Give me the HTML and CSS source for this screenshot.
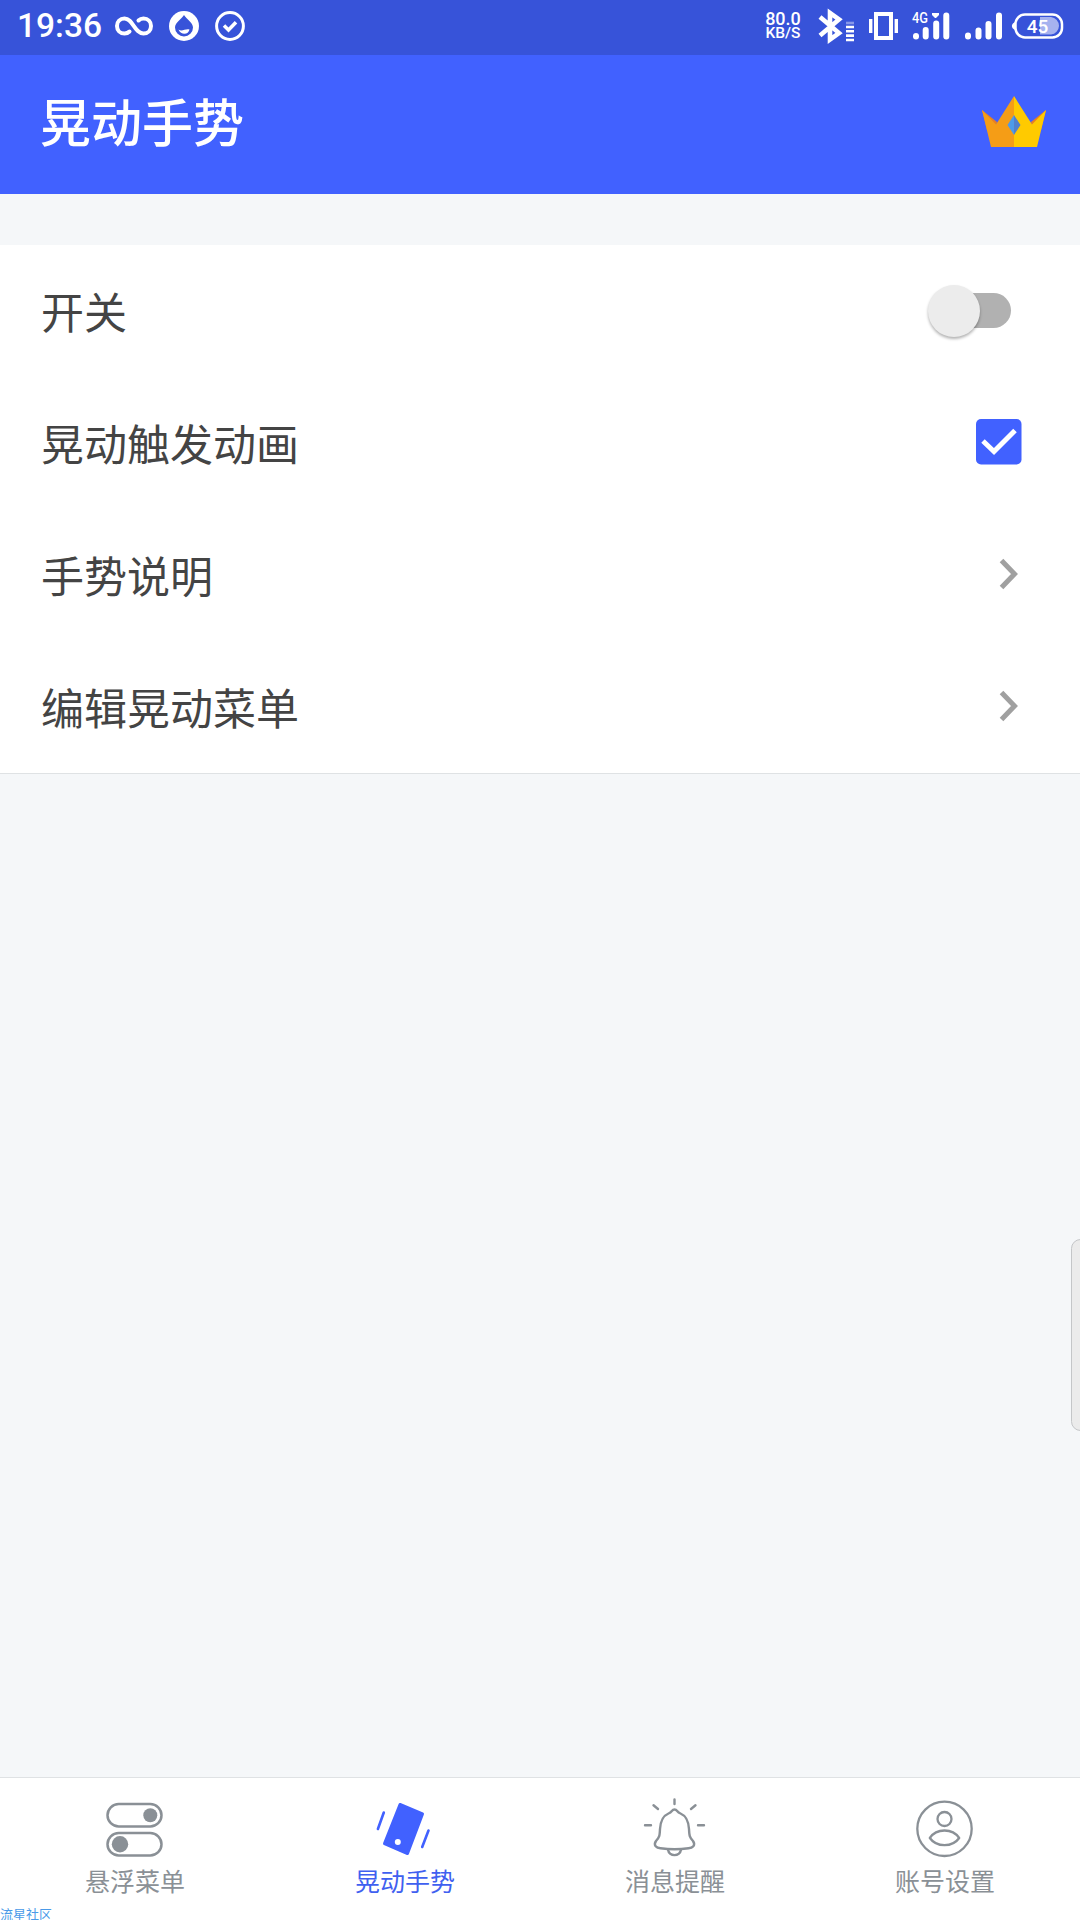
FILE: index.html
```html
<!DOCTYPE html>
<html lang="zh-CN">
<head>
<meta charset="utf-8">
<title>晃动手势</title>
<link rel="stylesheet" href="styles.css">
</head>
<body>
<div class="screen">
  <div class="status">
    <span class="clock">19:36</span>
    <svg class="ico-inf" width="40" height="30" viewBox="0 0 40 30" fill="none" stroke="#fff" stroke-width="4" stroke-linecap="round"><path d="M15.500 20.500C14 22 12.300 22.500 10.500 22.500C6 22.500 3 19.200 3 15S6 7.500 10.500 7.500C19 7.500 20.500 22.500 29.500 22.500C34 22.500 37 19.200 37 15S34 7.500 29.500 7.500C27.500 7.500 25.800 8.200 24.500 9.500"/></svg>
    <svg class="ico-drop" width="30" height="30" viewBox="0 0 30 30"><circle cx="15" cy="15" r="15" fill="#fff"/><path d="M15 4C17.500 8 24 11.500 24 16.500A9 9 0 0 1 6 16.500C6 11.500 12.500 8 15 4Z" fill="#3753d9"/><path d="M9.500 18.500C13 21 16.500 17.300 20.500 18.500C19.500 24 12 24.500 9.500 18.500Z" fill="#fff"/></svg>
    <svg width="30" height="30" viewBox="0 0 30 30" fill="none" stroke="#fff"><circle cx="15" cy="15" r="13.400" stroke-width="3"/><path d="M9 14.500L13.500 19L21 11.200" stroke-width="3.500"/></svg>
    <div class="speed"><span class="rate">80.0</span><span class="unit">KB/S</span></div>
    <svg class="ico-bt" width="37" height="34" viewBox="0 0 37 34" fill="none" stroke="#fff"><path d="M2 8L21 24L12 30.500V4L21 10.500L2 26.500" stroke-width="4.600"/><g stroke-width="2.600"><path d="M28 18H36M28 22.300H36M28 26.600H36M28 31H36"/><path d="M28 14H36" opacity=".4"/></g></svg>
    <svg class="ico-vib" width="29" height="28" viewBox="0 0 29 28" fill="none" stroke="#fff"><rect x="7" y="2" width="15" height="24" stroke-width="4"/><path d="M1.700 7V21M27.300 7V21" stroke-width="3.400"/></svg>
    <svg class="ico-sig" width="38" height="30" viewBox="0 0 38 30"><g stroke="#fff" stroke-width="6" stroke-linecap="round"><path d="M4 22.500V23" transform="translate(0 2.500)"/><path d="M13.700 19V25.500M24.200 12.500V25.500M34.300 4.500V25.500"/></g><path d="M20 2H27V4L24 7H23L20 4Z" fill="#fff"/><text class="net" x="0" y="12.200" textLength="16" lengthAdjust="spacingAndGlyphs">4G</text></svg>
    <svg class="ico-sig2" width="38" height="30" viewBox="0 0 38 30"><g stroke="#fff" stroke-width="6" stroke-linecap="round"><path d="M3 24.500V25.500M13.500 19.500V25.500M23.500 13V25.500M34 4.500V25.500"/></g></svg>
    <svg class="ico-bat" width="52" height="26" viewBox="0 0 52 26"><path d="M4 8.500V17.500C-1.500 15.500 -1.500 10.500 4 8.500Z" fill="#fff"/><path d="M28 4H39A9 9 0 0 1 47 13A9 9 0 0 1 39 21.500H28Z" fill="#a6b2ef"/><rect x="3.500" y="1.500" width="46.500" height="23" rx="9.500" fill="none" stroke="#fff" stroke-width="2.500"/><text class="pct" x="25.500" y="19.500" text-anchor="middle">45</text></svg>
  </div>
  <header class="bar">
    <h1 class="title">晃动手势</h1>
    <svg class="crown" width="66" height="52" viewBox="0 0 66 52"><path d="M1 10L16 22L14 32L6 30ZM65 10L50 22L52 32L60 30Z" fill="#e88022"/><path d="M1 10L15 24.500L33 -4V47H10Z" fill="#f59d16"/><path d="M65 10L51 24.500L33 -4V47H56Z" fill="#ffca00"/><path d="M33 15L26.500 25L33 35Z" fill="#4d9bea"/><path d="M33 15L39.500 25L33 35Z" fill="#5280cc"/></svg>
  </header>
  <main class="content">
    <section class="list">
      <div class="row"><span class="label">开关</span><span class="switch"><span class="thumb"></span></span></div>
      <div class="row"><span class="label">晃动触发动画</span><svg class="check" width="46" height="46" viewBox="0 0 46 46"><rect width="45.500" height="45.500" rx="5" fill="#4161ff"/><path d="M7 22L18 32.500L39 11.500" fill="none" stroke="#fff" stroke-width="5"/></svg></div>
      <div class="row"><span class="label">手势说明</span><svg class="chev" width="20" height="32" viewBox="0 0 20 32"><path d="M2.500 2.500L15.500 16L2.500 29.500" fill="none" stroke="#a0a0a0" stroke-width="5"/></svg></div>
      <div class="row"><span class="label">编辑晃动菜单</span><svg class="chev" width="20" height="32" viewBox="0 0 20 32"><path d="M2.500 2.500L15.500 16L2.500 29.500" fill="none" stroke="#a0a0a0" stroke-width="5"/></svg></div>
    </section>
  </main>
  <nav class="tabs">
    <div class="tab"><svg width="64" height="64" viewBox="0 0 64 64" fill="none" stroke="#8a9096" stroke-width="2.500"><rect x="4.500" y="6" width="54" height="22.500" rx="11.250"/><rect x="4.500" y="35" width="54" height="22.500" rx="11.250"/><g fill="#8a9096" stroke="none"><circle cx="47.300" cy="17.300" r="7"/><circle cx="17" cy="46.200" r="8.200"/></g></svg><span>悬浮菜单</span></div>
    <div class="tab active"><svg width="64" height="64" viewBox="0 0 64 64"><g fill="#4161ff" stroke="#4161ff" stroke-linejoin="round" stroke-linecap="round"><path d="M27 6.500L49.500 16L34.500 55.500L11.500 45.500Z" stroke-width="3"/><path d="M10.800 14.500L4.900 31M55.500 32.500L49.200 49" stroke-width="2.600"/></g><circle cx="24.800" cy="44" r="3" fill="#fff"/></svg><span>晃动手势</span></div>
    <div class="tab"><svg width="64" height="64" viewBox="0 0 64 64" fill="none" stroke="#8a9096" stroke-width="2.400" stroke-linecap="round" stroke-linejoin="round"><path d="M31.500 11.500C28.500 11.500 29.500 14 25.500 15.500C19.500 18 17.500 23 17 31C16.700 38 16.500 39 13 43C10 47.500 13.500 50 17.500 50.300C26.500 51.500 36.500 51.500 45.500 50.300C49.500 50 53 47.500 50 43C46.500 39 46.300 38 46 31C45.500 23 43.500 18 37.500 15.500C33.500 14 34.500 11.500 31.500 11.500Z"/><path d="M25 51.500C26 59 37 59 38 51.500M31.500 1.500V6M10.500 7.300L15 11M52.500 7.300L48 11M2 27.200H8M55 27.200H61"/></svg><span>消息提醒</span></div>
    <div class="tab"><svg width="64" height="64" viewBox="0 0 64 64" fill="none" stroke="#8a9096" stroke-width="2.300"><circle cx="31.500" cy="30.800" r="27.200"/><circle cx="31.500" cy="21" r="7"/><path d="M16.800 40C23.500 30 39.500 30 46.200 40C39.500 49.500 23.500 49.500 16.800 40Z" stroke-linejoin="round"/></svg><span>账号设置</span></div>
  </nav>
  <div class="edge"></div>
  <div class="mark">流星社区</div>
</div>
</body>
</html>
```
FILE: styles.css
```css
* { box-sizing: border-box; }
body { margin: 0; font-family: Roboto, "Noto Sans CJK SC", sans-serif; }
svg { display: block; flex: none; overflow: visible; }

.screen {
  position: relative;
  display: flex;
  flex-direction: column;
  width: 1080px;
  height: 1920px;
  overflow: hidden;
  background: #f5f7f9;
}

.status {
  display: flex;
  align-items: center;
  height: 55px;
  padding: 0 16px 3px 17px;
  background: #3753d9;
  color: #fff;
}
.clock { width: 97px; font-size: 33.500px; font-weight: 500; line-height: 40px; }
.ico-inf { margin-right: 15px; }
.ico-drop { margin-right: 16px; }
.speed {
  display: flex;
  flex-direction: column;
  align-items: center;
  width: 40px;
  margin-left: auto;
  font-weight: 500;
}
.rate { font-size: 18px; line-height: 15px; }
.unit { font-size: 15.500px; line-height: 15px; }
.ico-bt { margin-left: 15px; }
.ico-vib { margin-left: 14px; }
.ico-sig { margin: 0 15px 0 14px; }
.ico-sig2 { margin-right: 9px; }
.ico-bat { margin-bottom: 1px; }
.net { fill: #fff; font-size: 14px; font-weight: 500; }
.pct { fill: #fff; font-size: 19px; font-weight: 500; }

.bar {
  display: flex;
  align-items: center;
  justify-content: space-between;
  height: 139px;
  padding: 0 33px 0 40px;
  background: #4161ff;
}
.title { margin: 0; color: #fff; font-size: 51px; font-weight: 500; line-height: 76px; }
.crown { margin-top: 2px; }

.content { flex: 1; padding-top: 51px; }
.list { background: #fff; border-bottom: 1px solid #dfe2e4; }
.row {
  display: flex;
  align-items: center;
  justify-content: space-between;
  height: 132px;
  padding: 0 58px 0 41px;
  color: #444;
  font-size: 43px;
  line-height: 64px;
}
.label { padding-top: 5px; }
.switch {
  display: flex;
  align-items: center;
  width: 78px;
  height: 35px;
  margin: 0 11px 1px 0;
  border-radius: 18px;
  background: #b1b1b1;
}
.thumb {
  flex: none;
  width: 52px;
  height: 52px;
  margin-left: -5px;
  border-radius: 50%;
  background: #ececec;
  box-shadow: 0 2px 3px rgba(0, 0, 0, .3);
}
.check { margin-bottom: 2px; }
.chev { margin: 0 3px 2px 0; }

.tabs {
  display: flex;
  height: 143px;
  border-top: 1px solid #dfe2e4;
  background: #fff;
}
.tab {
  display: flex;
  flex: 1;
  flex-direction: column;
  align-items: center;
  gap: 2px;
  padding-top: 20px;
  color: #8a9096;
  font-size: 25px;
  line-height: 37px;
}
.active { color: #3f60f0; }

.edge {
  position: absolute;
  top: 1239px;
  right: -10px;
  width: 19px;
  height: 192px;
  border: 1px solid #c4c6c8;
  border-radius: 10px;
  background: #ebebeb;
}
.mark {
  position: absolute;
  left: 0;
  bottom: -4px;
  color: #4a9ae8;
  font-size: 13px;
  line-height: 19px;
}
```
